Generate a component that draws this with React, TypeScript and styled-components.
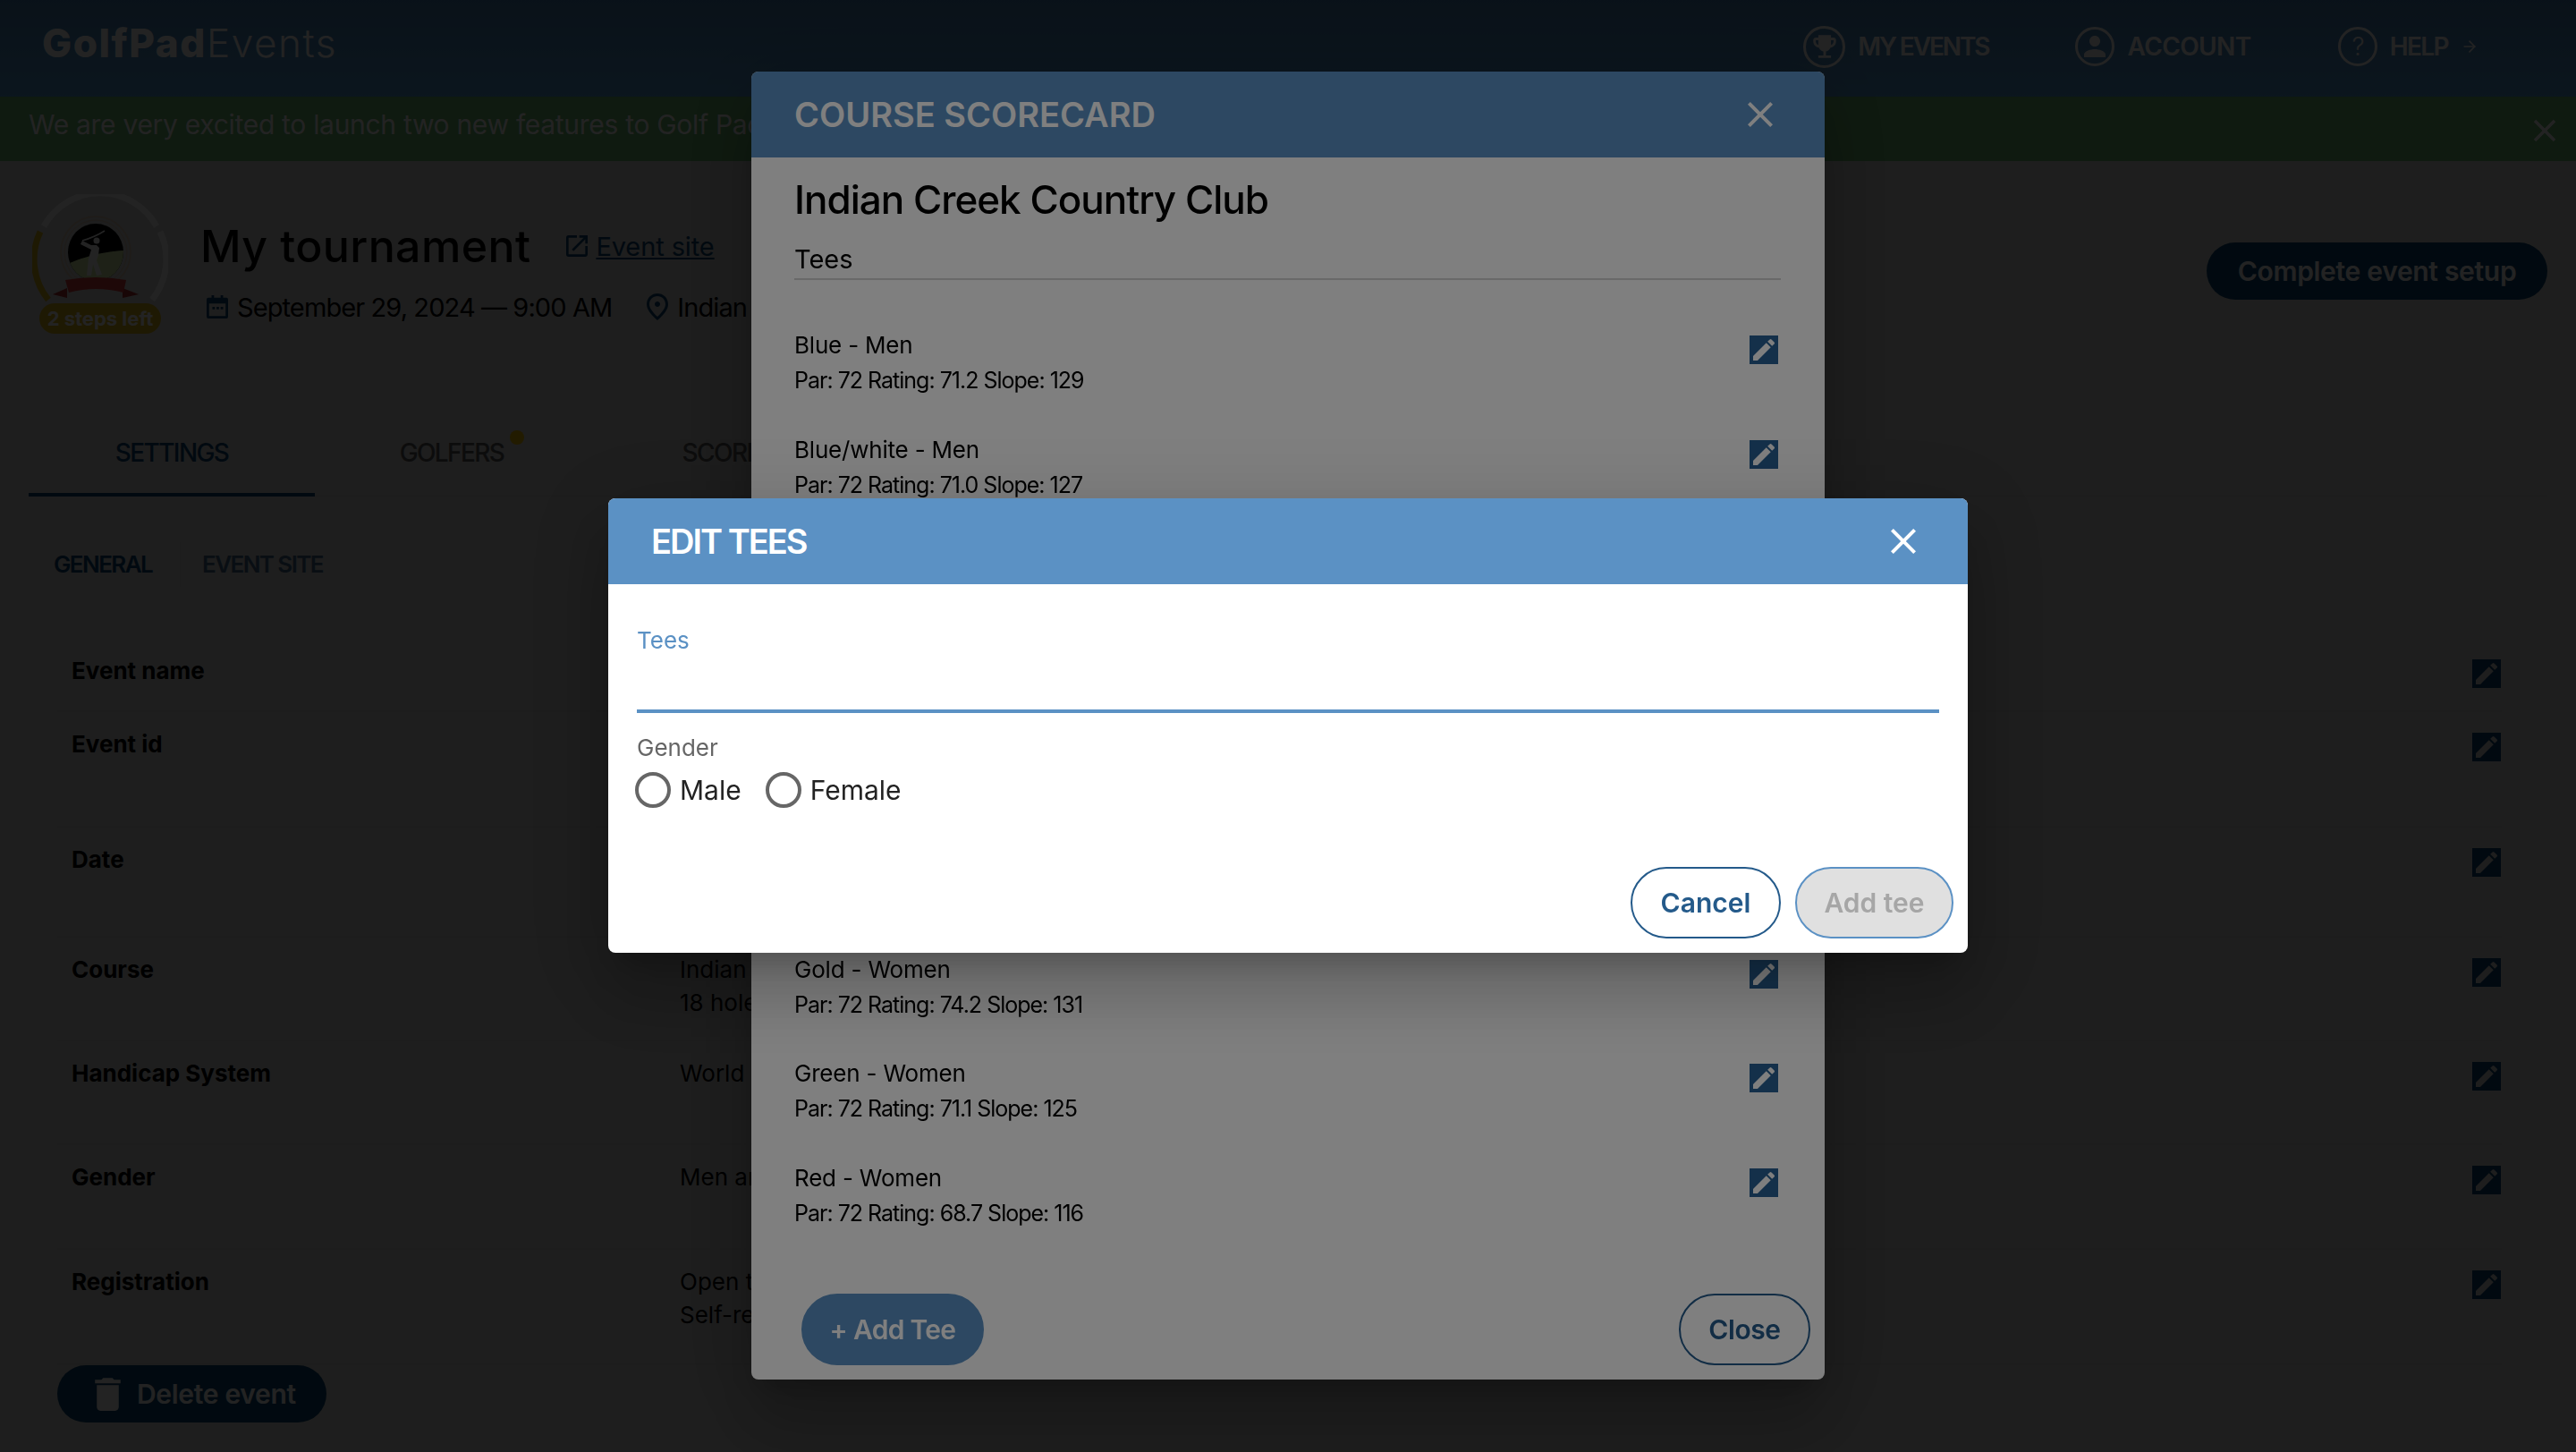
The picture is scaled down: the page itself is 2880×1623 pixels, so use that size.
import styled, { createGlobalStyle } from "styled-components";
import { MdClose, MdDelete, MdEdit, MdEmojiEvents, MdOpenInNew, MdOutlinePlace, MdPerson } from "react-icons/md";
import { ArrowRight } from "lucide-react";

const primary = "#0e4772";
const accent = "#5b91c4";

const Global = createGlobalStyle`
  html, body { margin: 0; height: 100%; overflow: hidden; }
  body { font-family: Inter, "Liberation Sans", sans-serif; background: #d6d6d6; color: #000; }
  * { box-sizing: border-box; }
`;

const Page = styled.div`
  width: 2880px;
  height: 1623px;
  overflow: hidden;
  background: #d6d6d6;
`;
const Header = styled.header`
  height: 108px;
  padding: 0 109px 0 47px;
  display: flex;
  align-items: flex-start;
  justify-content: space-between;
  background: linear-gradient(#477fb2, #559dd6);
  color: #fff;
`;
const Logo = styled.div`
  font-size: 44px;
  line-height: 96px;
  letter-spacing: 1.6px;
  font-weight: 300;
  b { font-weight: 800; }
`;
const Nav = styled.nav`
  display: flex;
  align-items: center;
  height: 104px;
`;
const NavItem = styled.a<{ $gap: number; $ls: number }>`
  display: flex;
  align-items: center;
  margin-right: ${(p) => p.$gap}px;
  font-size: 28px;
  font-weight: 600;
  letter-spacing: ${(p) => p.$ls}px;
  gap: 14px;
`;
const Ring = styled.span<{ $size: number }>`
  width: ${(p) => p.$size}px;
  height: ${(p) => p.$size}px;
  border: 3px solid #fff;
  border-radius: 50%;
  display: flex;
  align-items: center;
  justify-content: center;
  font-size: 28px;
  font-weight: 300;
`;
const Banner = styled.div`
  height: 72px;
  padding: 0 14px 0 32px;
  display: flex;
  align-items: flex-start;
  justify-content: space-between;
  background: #6bba72;
  color: #fff;
  font-size: 30px;
  letter-spacing: -0.3px;
  line-height: 63px;
  white-space: nowrap;
  svg { margin-top: 17px; }
`;
const EventHead = styled.section`
  height: 300px;
  padding: 37px 32px 0 36px;
  display: flex;
  align-items: flex-start;
`;
const Avatar = styled.div`
  position: relative;
  width: 152px;
  height: 156px;
  flex: none;
`;
const StepsBadge = styled.span`
  position: absolute;
  left: 8px;
  bottom: 0;
  width: 136px;
  height: 34px;
  border-radius: 17px;
  background: #dcb41c;
  color: #fff;
  font-size: 22px;
  font-weight: 700;
  line-height: 34px;
  text-align: center;
  white-space: nowrap;
`;
const EventInfo = styled.div`
  margin: 26px 0 0 36px;
`;
const TitleRow = styled.div`
  display: flex;
  align-items: center;
  gap: 36px;
  height: 64px;
`;
const EventTitle = styled.h1`
  margin: 0;
  font-size: 50px;
  font-weight: 500;
  letter-spacing: 0.4px;
  white-space: nowrap;
`;
const SiteLink = styled.a`
  display: flex;
  align-items: center;
  gap: 5px;
  font-size: 29px;
  letter-spacing: -0.1px;
  color: ${primary};
  span { text-decoration: underline; }
`;
const MetaRow = styled.div`
  display: flex;
  align-items: center;
  margin: 16px 0 0 7px;
  height: 40px;
  font-size: 29px;
  letter-spacing: -0.9px;
  white-space: nowrap;
`;
const MetaItem = styled.span<{ $gap: number; $inner: number }>`
  display: flex;
  align-items: center;
  gap: ${(p) => p.$inner}px;
  margin-right: ${(p) => p.$gap}px;
  svg { color: ${primary}; flex: none; }
`;
const SetupButton = styled.button`
  margin: 54px 0 0 auto;
  width: 381px;
  height: 64px;
  border: 0;
  border-radius: 32px;
  background: ${primary};
  color: #fff;
  font: 600 30px Inter, sans-serif;
  letter-spacing: -0.3px;
`;
const Tabs = styled.nav`
  margin: 0 32px;
  display: flex;
  height: 75px;
  border-bottom: 2px solid #cfcfcf;
`;
const Tab = styled.a<{ $active?: boolean; $w: number }>`
  position: relative;
  width: ${(p) => p.$w}px;
  height: 75px;
  padding-top: 7px;
  text-align: center;
  font-size: 28px;
  line-height: 38px;
  font-weight: 500;
  letter-spacing: -1.6px;
  color: ${(p) => (p.$active ? primary : "#5c5c5c")};
  border-bottom: 4px solid ${(p) => (p.$active ? primary : "transparent")};
`;
const Dot = styled.i`
  position: absolute;
  left: 218px;
  top: 1px;
  width: 16px;
  height: 16px;
  border-radius: 50%;
  background: #f2c200;
`;
const SubTabs = styled.div`
  margin: 51px 0 0 60px;
  display: flex;
  height: 50px;
  align-items: center;
  font-size: 26px;
  font-weight: 600;
  letter-spacing: -1.6px;
  color: ${primary};
`;
const SubTab = styled.a<{ $dim?: boolean }>`
  padding-right: 31px;
  margin-right: 24px;
  line-height: 50px;
  opacity: ${(p) => (p.$dim ? 0.75 : 1)};
  border-right: ${(p) => (p.$dim ? "0" : "1px solid #cfcfcf")};
`;
const SettingsList = styled.div`
  margin: 58px 83px 0 64px;
`;
const SettingRow = styled.div<{ $h: number }>`
  height: ${(p) => p.$h}px;
  padding: 17px 0 0 16px;
  display: grid;
  grid-template-columns: 680px 1fr 33px;
  font-size: 26px;
  line-height: 37px;
  border-bottom: 2px solid #d0d0d0;
`;
const SettingLabel = styled.div`
  font-weight: 700;
`;
const SettingValue = styled.div`
  white-space: nowrap;
  overflow: hidden;
`;
const EditBox = styled.span<{ $fill: string; $bg: string }>`
  width: 32px;
  height: 32px;
  display: block;
  background: ${(p) => p.$bg};
  color: ${(p) => p.$fill};
  svg { display: block; }
`;
const SettingEdit = styled(EditBox)`
  margin-top: 6px;
`;
const DeleteButton = styled.button`
  margin-left: 64px;
  width: 301px;
  height: 64px;
  display: flex;
  align-items: center;
  gap: 8px;
  padding: 0 0 0 32px;
  border: 0;
  border-radius: 32px;
  background: ${primary};
  color: #fff;
  font: 600 30px Inter, sans-serif;
  letter-spacing: -0.3px;
`;

const Backdrop = styled.div<{ $alpha: number }>`
  position: fixed;
  inset: 0;
  display: flex;
  align-items: center;
  justify-content: center;
  background: rgba(0, 0, 0, ${(p) => p.$alpha});
`;
const Dialog = styled.div<{ $w: number; $h: number }>`
  width: ${(p) => p.$w}px;
  height: ${(p) => p.$h}px;
  margin-bottom: 1px;
  display: flex;
  flex-direction: column;
  border-radius: 8px;
  background: #fff;
  overflow: hidden;
  box-shadow: 0 22px 30px -14px rgba(0, 0, 0, 0.2), 0 48px 76px 6px rgba(0, 0, 0, 0.14), 0 18px 92px 16px rgba(0, 0, 0, 0.12);
`;
const DialogHeader = styled.div<{ $ls: number }>`
  height: 96px;
  flex: none;
  padding: 0 48px 0 48px;
  display: flex;
  align-items: center;
  justify-content: space-between;
  background: ${accent};
  color: #fff;
  font-size: 38px;
  font-weight: 600;
  letter-spacing: ${(p) => p.$ls}px;
`;
const ScorecardBody = styled.div`
  padding: 17px 49px 0 48px;
`;
const CourseName = styled.h2`
  margin: 0;
  font-size: 44px;
  line-height: 60px;
  font-weight: 500;
  letter-spacing: -1px;
`;
const TeesHeading = styled.div`
  margin-top: 17px;
  padding-bottom: 1px;
  font-size: 29px;
  line-height: 40px;
  border-bottom: 2px solid #d2d2d2;
`;
const TeeList = styled.div`
  margin-top: 54px;
`;
const TeeRow = styled.div`
  height: 116.6px;
  padding-right: 3px;
  display: flex;
  justify-content: space-between;
  align-items: flex-start;
  font-size: 26px;
  letter-spacing: -0.2px;
  line-height: 38px;
`;
const TeeMeta = styled.div`
  font-size: 25px;
  letter-spacing: -1px;
  margin-top: 1px;
`;
const CoveredTees = styled.div`
  height: 464.4px;
`;
const TeeEdit = styled(EditBox)`
  margin-top: 8px;
`;
const Footer = styled.div<{ $left?: number }>`
  margin-top: auto;
  padding: 0 16px 16px ${(p) => p.$left ?? 0}px;
  display: flex;
  align-items: center;
  justify-content: ${(p) => (p.$left ? "space-between" : "flex-end")};
  gap: 16px;
`;
const Pill = styled.button<{ $kind: "outline" | "filled" | "disabled"; $w: number; $ls?: number }>`
  width: ${(p) => p.$w}px;
  height: 80px;
  border-radius: 40px;
  font: 600 30px Inter, sans-serif;
  letter-spacing: ${(p) => p.$ls ?? 0}px;
  border: 2.5px solid ${(p) => (p.$kind === "outline" ? "#245a8a" : accent)};
  background: ${(p) => (p.$kind === "filled" ? accent : p.$kind === "disabled" ? "#e0e0e0" : "#fff")};
  color: ${(p) => (p.$kind === "filled" ? "#fff" : p.$kind === "disabled" ? "#a6a6a6" : "#245a8a")};
`;
const EditBody = styled.div`
  padding: 48px 32px 0;
`;
const FieldLabel = styled.div<{ $focus?: boolean }>`
  font-size: 26px;
  line-height: 30px;
  color: ${(p) => (p.$focus ? accent : "#666")};
`;
const TextInput = styled.input`
  display: block;
  width: 100%;
  height: 66px;
  border: 0;
  border-bottom: 4px solid ${accent};
  outline: 0;
  margin-bottom: 24px;
`;
const RadioGroup = styled.div`
  display: flex;
  margin: 12px 0 0 -2px;
  gap: 27px;
`;
const RadioOption = styled.label`
  display: flex;
  align-items: center;
  gap: 10px;
  font-size: 30px;
  line-height: 40px;
  color: #222;
`;
const RadioMark = styled.span`
  width: 40px;
  height: 40px;
  border: 4px solid #666;
  border-radius: 50%;
`;

const settings = [
  { label: "Event name", h: 82, value: [] },
  { label: "Event id", h: 129, value: [] },
  { label: "Date", h: 123, value: [] },
  { label: "Course", h: 116, value: ["Indian Creek Country Club", "18 holes"] },
  { label: "Handicap System", h: 116, value: ["World Handicap System"] },
  { label: "Gender", h: 117, value: ["Men and women"] },
  { label: "Registration", h: 129, value: ["Open to everyone", "Self-registration"] },
];

const topTees = [
  { name: "Blue - Men", meta: "Par: 72 Rating: 71.2 Slope: 129" },
  { name: "Blue/white - Men", meta: "Par: 72 Rating: 71.0 Slope: 127" },
];
const bottomTees = [
  { name: "Gold - Women", meta: "Par: 72 Rating: 74.2 Slope: 131" },
  { name: "Green - Women", meta: "Par: 72 Rating: 71.1 Slope: 125" },
  { name: "Red - Women", meta: "Par: 72 Rating: 68.7 Slope: 116" },
];

function ProgressBadge() {
  return (
    <svg width="152" height="124" viewBox="0 0 152 124" fill="none">
      <defs>
        <clipPath id="crest">
          <ellipse cx="71" cy="65" rx="31" ry="32" />
        </clipPath>
      </defs>
      <path d="M13 36A72 72 0 0 1 139 36" stroke="#fff" strokeWidth="7" />
      <path d="M143 42A72 72 0 0 1 134 118" stroke="#fff" strokeWidth="7" />
      <path d="M9 42A72 72 0 0 0 18 118" stroke="#dcb41c" strokeWidth="7" />
      <ellipse cx="71" cy="65" rx="39" ry="40" stroke="#e0c8b0" strokeWidth="1.5" />
      <ellipse cx="71" cy="65" rx="35" ry="36" stroke="#e0c8b0" strokeWidth="1" />
      <ellipse cx="71" cy="65" rx="31" ry="32" fill="#000" />
      <path d="M40 78C52 72 78 64 102 63V100H40Z" fill="#d8f0a8" clipPath="url(#crest)" />
      <path d="M56 52L66 57L72 57L75 60L74 68L72 74L78 90L72 91L68 78L66 91L61 91L63 72L66 62L54 56Z" fill="#fff" />
      <circle cx="72" cy="52" r="3.5" fill="#fff" />
      <path d="M56 52Q70 48 81 41" stroke="#fff" strokeWidth="1.5" />
      <path d="M39 105L23 112L39 116ZM101 105L119 112L101 116Z" fill="#b02c2c" />
      <path d="M37 96Q71 90 105 96L102 110Q71 102 41 110Z" fill="#d83c3c" />
    </svg>
  );
}

function CalendarIcon() {
  return (
    <svg width="24" height="26" viewBox="0 0 26 28" fill="currentColor">
      <path d="M6 0h3v3h8V0h3v3h4a2 2 0 0 1 2 2v21a2 2 0 0 1-2 2H2a2 2 0 0 1-2-2V5a2 2 0 0 1 2-2h4zM3 10v15h20V10z" />
      <rect x="7" y="14" width="3" height="3" />
      <rect x="12" y="14" width="3" height="3" />
      <rect x="17" y="14" width="3" height="3" />
    </svg>
  );
}

function App() {
  return (
    <>
      <Global />
      <Page>
        <Header>
          <Logo>
            <b>GolfPad</b>Events
          </Logo>
          <Nav>
            <NavItem $gap={97} $ls={-2.1}>
              <Ring $size={47}>
                <MdEmojiEvents size={34} />
              </Ring>
              MY EVENTS
            </NavItem>
            <NavItem $gap={97} $ls={-0.6}>
              <Ring $size={44}>
                <MdPerson size={36} />
              </Ring>
              ACCOUNT
            </NavItem>
            <NavItem $gap={0} $ls={-1.6}>
              <Ring $size={44}>?</Ring>
              HELP
              <ArrowRight size={20} />
            </NavItem>
          </Nav>
        </Header>
        <Banner>
          We are very excited to launch two new features to Golf Pad Events
          <MdClose size={42} />
        </Banner>
        <EventHead>
          <Avatar>
            <ProgressBadge />
            <StepsBadge>2 steps left</StepsBadge>
          </Avatar>
          <EventInfo>
            <TitleRow>
              <EventTitle>My tournament</EventTitle>
              <SiteLink>
                <MdOpenInNew size={32} />
                <span>Event site</span>
              </SiteLink>
            </TitleRow>
            <MetaRow>
              <MetaItem $gap={33} $inner={10}>
                <CalendarIcon />
                September 29, 2024 — 9:00 AM
              </MetaItem>
              <MetaItem $gap={0} $inner={4}>
                <MdOutlinePlace size={36} />
                Indian Creek Country Club
              </MetaItem>
            </MetaRow>
          </EventInfo>
          <SetupButton>Complete event setup</SetupButton>
        </EventHead>
        <Tabs>
          <Tab $active $w={320}>
            SETTINGS
          </Tab>
          <Tab $w={306}>
            GOLFERS
            <Dot />
          </Tab>
          <Tab $w={326}>SCORING</Tab>
        </Tabs>
        <SubTabs>
          <SubTab>GENERAL</SubTab>
          <SubTab $dim>EVENT SITE</SubTab>
        </SubTabs>
        <SettingsList>
          {settings.map((row) => (
            <SettingRow key={row.label} $h={row.h}>
              <SettingLabel>{row.label}</SettingLabel>
              <SettingValue>
                {row.value.map((line) => (
                  <div key={line}>{line}</div>
                ))}
              </SettingValue>
              <SettingEdit $bg={primary} $fill="#d6d6d6">
                <MdEdit size={32} />
              </SettingEdit>
            </SettingRow>
          ))}
        </SettingsList>
        <DeleteButton>
          <MdDelete size={49} />
          Delete event
        </DeleteButton>
      </Page>

      <Backdrop $alpha={0.72}>
        <Dialog $w={1200} $h={1462}>
          <DialogHeader $ls={0}>
            COURSE SCORECARD
            <MdClose size={48} />
          </DialogHeader>
          <ScorecardBody>
            <CourseName>Indian Creek Country Club</CourseName>
            <TeesHeading>Tees</TeesHeading>
            <TeeList>
              {topTees.map((tee) => (
                <TeeRow key={tee.name}>
                  <div>
                    {tee.name}
                    <TeeMeta>{tee.meta}</TeeMeta>
                  </div>
                  <TeeEdit $bg="#286094" $fill="#fff">
                    <MdEdit size={32} />
                  </TeeEdit>
                </TeeRow>
              ))}
              <CoveredTees />
              {bottomTees.map((tee) => (
                <TeeRow key={tee.name}>
                  <div>
                    {tee.name}
                    <TeeMeta>{tee.meta}</TeeMeta>
                  </div>
                  <TeeEdit $bg="#286094" $fill="#fff">
                    <MdEdit size={32} />
                  </TeeEdit>
                </TeeRow>
              ))}
            </TeeList>
          </ScorecardBody>
          <Footer $left={56}>
            <Pill $kind="filled" $w={204} $ls={-0.7}>
              + Add Tee
            </Pill>
            <Pill $kind="outline" $w={147} $ls={-0.4}>
              Close
            </Pill>
          </Footer>
        </Dialog>
      </Backdrop>

      <Backdrop $alpha={0.5}>
        <Dialog $w={1520} $h={508}>
          <DialogHeader $ls={-2}>
            EDIT TEES
            <MdClose size={48} />
          </DialogHeader>
          <EditBody>
            <FieldLabel $focus>Tees</FieldLabel>
            <TextInput />
            <FieldLabel>Gender</FieldLabel>
            <RadioGroup>
              <RadioOption>
                <RadioMark />
                Male
              </RadioOption>
              <RadioOption>
                <RadioMark />
                Female
              </RadioOption>
            </RadioGroup>
          </EditBody>
          <Footer>
            <Pill $kind="outline" $w={168}>
              Cancel
            </Pill>
            <Pill $kind="disabled" $w={177}>
              Add tee
            </Pill>
          </Footer>
        </Dialog>
      </Backdrop>
    </>
  );
}

export default App;
